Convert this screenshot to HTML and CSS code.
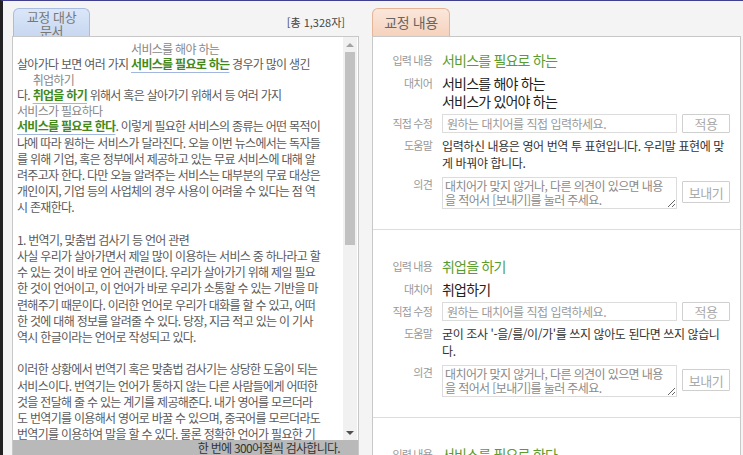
FILE: index.html
```html
<!DOCTYPE html>
<html lang="ko">
<head>
    <meta charset="UTF-8">
    <title>맞춤법 검사</title>
    <link rel="stylesheet" href="styles.css">
</head>
<body>
<div class="page">
    <div class="column column-left">
        <div class="tab-row">
            <div class="tab tab-blue">교정 대상 문서</div>
            <span class="count">[총 1,328자]</span>
        </div>
        <div class="doc-box">
            <div class="doc-body">
                <div class="doc-text">살아가다 보면 여러 가지 <span class="fix"><span class="alt">서비스를 해야 하는</span><span class="orig">서비스를 필요로 하는</span></span> 경우가 많이 생긴<br>다. <span class="fix"><span class="alt">취업하기</span><span class="orig">취업을 하기</span></span> 위해서 혹은 살아가기 위해서 등 여러 가지<br><span class="fix"><span class="alt">서비스가 필요하다</span><span class="orig">서비스를 필요로 한다</span></span>. 이렇게 필요한 서비스의 종류는 어떤 목적이<br>냐에 따라 원하는 서비스가 달라진다. 오늘 이번 뉴스에서는 독자들<br>를 위해 기업, 혹은 정부에서 제공하고 있는 무료 서비스에 대해 알<br>려주고자 한다. 다만 오늘 알려주는 서비스는 대부분의 무료 대상은<br>개인이지, 기업 등의 사업체의 경우 사용이 어려울 수 있다는 점 역<br>시 존재한다.<br>
<br>
1. 번역기, 맞춤법 검사기 등 언어 관련<br>사실 우리가 살아가면서 제일 많이 이용하는 서비스 중 하나라고 할<br>수 있는 것이 바로 언어 관련이다. 우리가 살아가기 위해 제일 필요<br>한 것이 언어이고, 이 언어가 바로 우리가 소통할 수 있는 기반을 마<br>련해주기 때문이다. 이러한 언어로 우리가 대화를 할 수 있고, 어떠<br>한 것에 대해 정보를 알려줄 수 있다. 당장, 지금 적고 있는 이 기사<br>역시 한글이라는 언어로 작성되고 있다.<br>
<br>
이러한 상황에서 번역기 혹은 맞춤법 검사기는 상당한 도움이 되는<br>서비스이다. 번역기는 언어가 통하지 않는 다른 사람들에게 어떠한<br>것을 전달해 줄 수 있는 계기를 제공해준다. 내가 영어를 모르더라<br>도 번역기를 이용해서 영어로 바꿀 수 있으며, 중국어를 모르더라도<br>번역기를 이용하여 말을 할 수 있다. 물론 정확한 언어가 필요한 기<br>업이나 공공기관의 문서라면 전문 번역가의 도움을 받는 것이 좋지만, 일상적인 대화나 간단한 정보를 얻는 데에는 번역기만으로도 충분하다.
                </div>
                <div class="scrollbar">
                    <span class="scroll-btn scroll-up"></span>
                    <div class="scroll-track"><div class="scroll-thumb"></div></div>
                    <span class="scroll-btn scroll-down"></span>
                </div>
            </div>
            <div class="doc-foot">한 번에 300어절씩 검사합니다.</div>
        </div>
    </div>

    <div class="column column-right">
        <div class="tab-row">
            <div class="tab tab-orange">교정 내용</div>
        </div>
        <div class="result-box">
            <div class="result">
                <div class="row row-main">
                    <span class="row-label">입력 내용</span>
                    <span class="row-value input-word">서비스를 필요로 하는</span>
                </div>
                <div class="row row-alt">
                    <span class="row-label">대치어</span>
                    <span class="row-value alt-word">서비스를 해야 하는<br>서비스가 있어야 하는</span>
                </div>
                <div class="row row-edit">
                    <span class="row-label">직접 수정</span>
                    <input class="edit-input" type="text" placeholder="원하는 대치어를 직접 입력하세요.">
                    <button class="small-btn">적용</button>
                </div>
                <div class="row row-help">
                    <span class="row-label">도움말</span>
                    <span class="row-value help-text">입력하신 내용은 영어 번역 투 표현입니다. 우리말 표현에 맞<br>게 바꿔야 합니다.</span>
                </div>
                <div class="row row-note">
                    <span class="row-label">의견</span>
                    <textarea class="note-input" placeholder="대치어가 맞지 않거나, 다른 의견이 있으면 내용&#10;을 적어서 [보내기]를 눌러 주세요."></textarea>
                    <button class="small-btn send-btn">보내기</button>
                </div>
            </div>

            <div class="result">
                <div class="row row-main">
                    <span class="row-label">입력 내용</span>
                    <span class="row-value input-word">취업을 하기</span>
                </div>
                <div class="row row-alt">
                    <span class="row-label">대치어</span>
                    <span class="row-value alt-word">취업하기</span>
                </div>
                <div class="row row-edit">
                    <span class="row-label">직접 수정</span>
                    <input class="edit-input" type="text" placeholder="원하는 대치어를 직접 입력하세요.">
                    <button class="small-btn">적용</button>
                </div>
                <div class="row row-help">
                    <span class="row-label">도움말</span>
                    <span class="row-value help-text">굳이 조사 '-을/를/이/가'를 쓰지 않아도 된다면 쓰지 않습니<br>다.</span>
                </div>
                <div class="row row-note">
                    <span class="row-label">의견</span>
                    <textarea class="note-input" placeholder="대치어가 맞지 않거나, 다른 의견이 있으면 내용&#10;을 적어서 [보내기]를 눌러 주세요."></textarea>
                    <button class="small-btn send-btn">보내기</button>
                </div>
            </div>

            <div class="result">
                <div class="row row-main">
                    <span class="row-label">입력 내용</span>
                    <span class="row-value input-word">서비스를 필요로 한다</span>
                </div>
            </div>
        </div>
    </div>
</div>
</body>
</html>
```

FILE: styles.css
```css
* {
    box-sizing: border-box;
}

html, body {
    margin: 0;
    height: 100%;
}

body {
    background: #f4f4f4;
    font-family: "Noto Sans CJK KR", "Noto Sans", sans-serif;
    color: #555;
    overflow: hidden;
}

.page {
    display: flex;
    gap: 13px;
    height: 480px;
    padding: 7px 0 0 9px;
    border-top: 1px solid #3f3f8e;
    border-left: 3px solid #222;
}

.column {
    display: flex;
    flex-direction: column;
}

.column-left {
    width: 347px;
}

.column-right {
    width: 369px;
}

.tab-row {
    display: flex;
    align-items: flex-end;
    justify-content: space-between;
    height: 28px;
}

.tab {
    height: 28px;
    border: 1px solid;
    border-bottom: none;
    border-radius: 6px 6px 0 0;
    text-align: center;
    font-size: 13px;
    letter-spacing: -0.4px;
    color: #777;
    overflow: hidden;
    word-break: keep-all;
}

.tab-blue {
    width: 77px;
    margin-left: 1px;
    padding-top: 1px;
    line-height: 14px;
    background: linear-gradient(#dbe6f8, #c8d8f1);
    border-color: #a9bde0;
}

.tab-orange {
    width: 78px;
    line-height: 26px;
    font-size: 14px;
    color: #666;
    background: linear-gradient(#fbe7db, #f5d2bd);
    border-color: #e6b497;
}

.count {
    font-size: 11px;
    line-height: 14px;
    color: #444;
    padding-right: 14px;
    margin-bottom: 7px;
}

/* left: document */
.doc-box {
    background: #fff;
    border: 1px solid #c8c8c8;
}

.doc-body {
    display: flex;
    height: 403px;
}

.doc-text {
    flex: 1;
    overflow: hidden;
    padding: 4px 0 0 4px;
    font-size: 12px;
    line-height: 16.2px;
    letter-spacing: -0.7px;
    color: #5a5a5a;
}

.fix {
    display: inline-block;
}

.fix .alt {
    display: block;
    line-height: 15px;
    color: #888;
}

.fix .orig {
    display: block;
    color: #43891a;
    font-weight: 700;
    text-decoration: underline;
    text-decoration-color: #a3b6df;
    text-underline-offset: 3px;
}

.scrollbar {
    display: flex;
    flex-direction: column;
    width: 14px;
    margin-right: 1px;
    background: #f1f1f1;
}

.scroll-btn {
    display: flex;
    align-items: center;
    justify-content: center;
    height: 15px;
}

.scroll-btn::before {
    content: "";
    border-left: 4px solid transparent;
    border-right: 4px solid transparent;
}

.scroll-up::before {
    border-bottom: 4px solid #a3a3a3;
}

.scroll-down::before {
    border-top: 4px solid #505050;
}

.scroll-track {
    flex: 1;
    padding: 0 2px;
}

.scroll-thumb {
    height: 193px;
    background: #c1c1c1;
}

.doc-foot {
    height: 30px;
    padding-right: 18px;
    background: #b9b9b9;
    text-align: right;
    font-size: 12px;
    line-height: 16px;
    letter-spacing: -0.7px;
    color: #333;
}

/* right: results */
.result-box {
    height: 444px;
    background: #fff;
    border: 1px solid #c8c8c8;
    overflow: hidden;
}

.result {
    padding: 26px 0 20px;
    border-bottom: 1px solid #ddd;
}

.result:first-child {
    padding-top: 13px;
}

.row {
    display: flex;
    align-items: flex-start;
    margin-top: 4px;
}

.row-main {
    margin-top: 0;
}

.row-label {
    flex: none;
    width: 59px;
    text-align: right;
    font-size: 11px;
    letter-spacing: -0.8px;
    color: #999;
}

.row-value {
    margin-left: 10px;
}

.row-main .row-label {
    line-height: 20px;
}

.input-word {
    font-size: 14px;
    line-height: 20px;
    letter-spacing: -0.8px;
    color: #5b9c2d;
}

.row-alt .row-label {
    line-height: 18px;
}

.alt-word {
    font-size: 14px;
    line-height: 18px;
    letter-spacing: -0.8px;
    color: #222;
}

.row-edit {
    align-items: center;
}

.row-edit .row-label {
    line-height: 19px;
}

.edit-input {
    width: 235px;
    height: 19px;
    margin: 0 0 0 10px;
    padding: 0 4px;
    border: 1px solid #dcdcdc;
    font-family: inherit;
    font-size: 12px;
    letter-spacing: -0.5px;
}

.edit-input::placeholder {
    color: #9a9a9a;
}

.small-btn {
    width: 48px;
    height: 19px;
    margin-left: 5px;
    padding: 0;
    border: 1px solid #cfcfcf;
    border-radius: 1px;
    background: #fff;
    font-family: inherit;
    font-size: 13px;
    line-height: 17px;
    letter-spacing: -0.4px;
    color: #aaa;
}

.row-help .row-label {
    line-height: 17px;
}

.help-text {
    flex: 1;
    white-space: nowrap;
    font-size: 12px;
    line-height: 17px;
    letter-spacing: -0.4px;
    color: #333;
}

.row-note {
    margin-top: 6px;
}

.row-note .row-label {
    line-height: 15px;
}

.note-input {
    width: 235px;
    height: 32px;
    margin: 0 0 0 10px;
    padding: 1px 2px;
    border: 1px solid #dcdcdc;
    font-family: inherit;
    font-size: 12px;
    line-height: 14px;
    letter-spacing: -0.6px;
}

.note-input::placeholder {
    color: #8a8a8a;
}

.send-btn {
    height: 22px;
    margin-top: 4px;
}
```
